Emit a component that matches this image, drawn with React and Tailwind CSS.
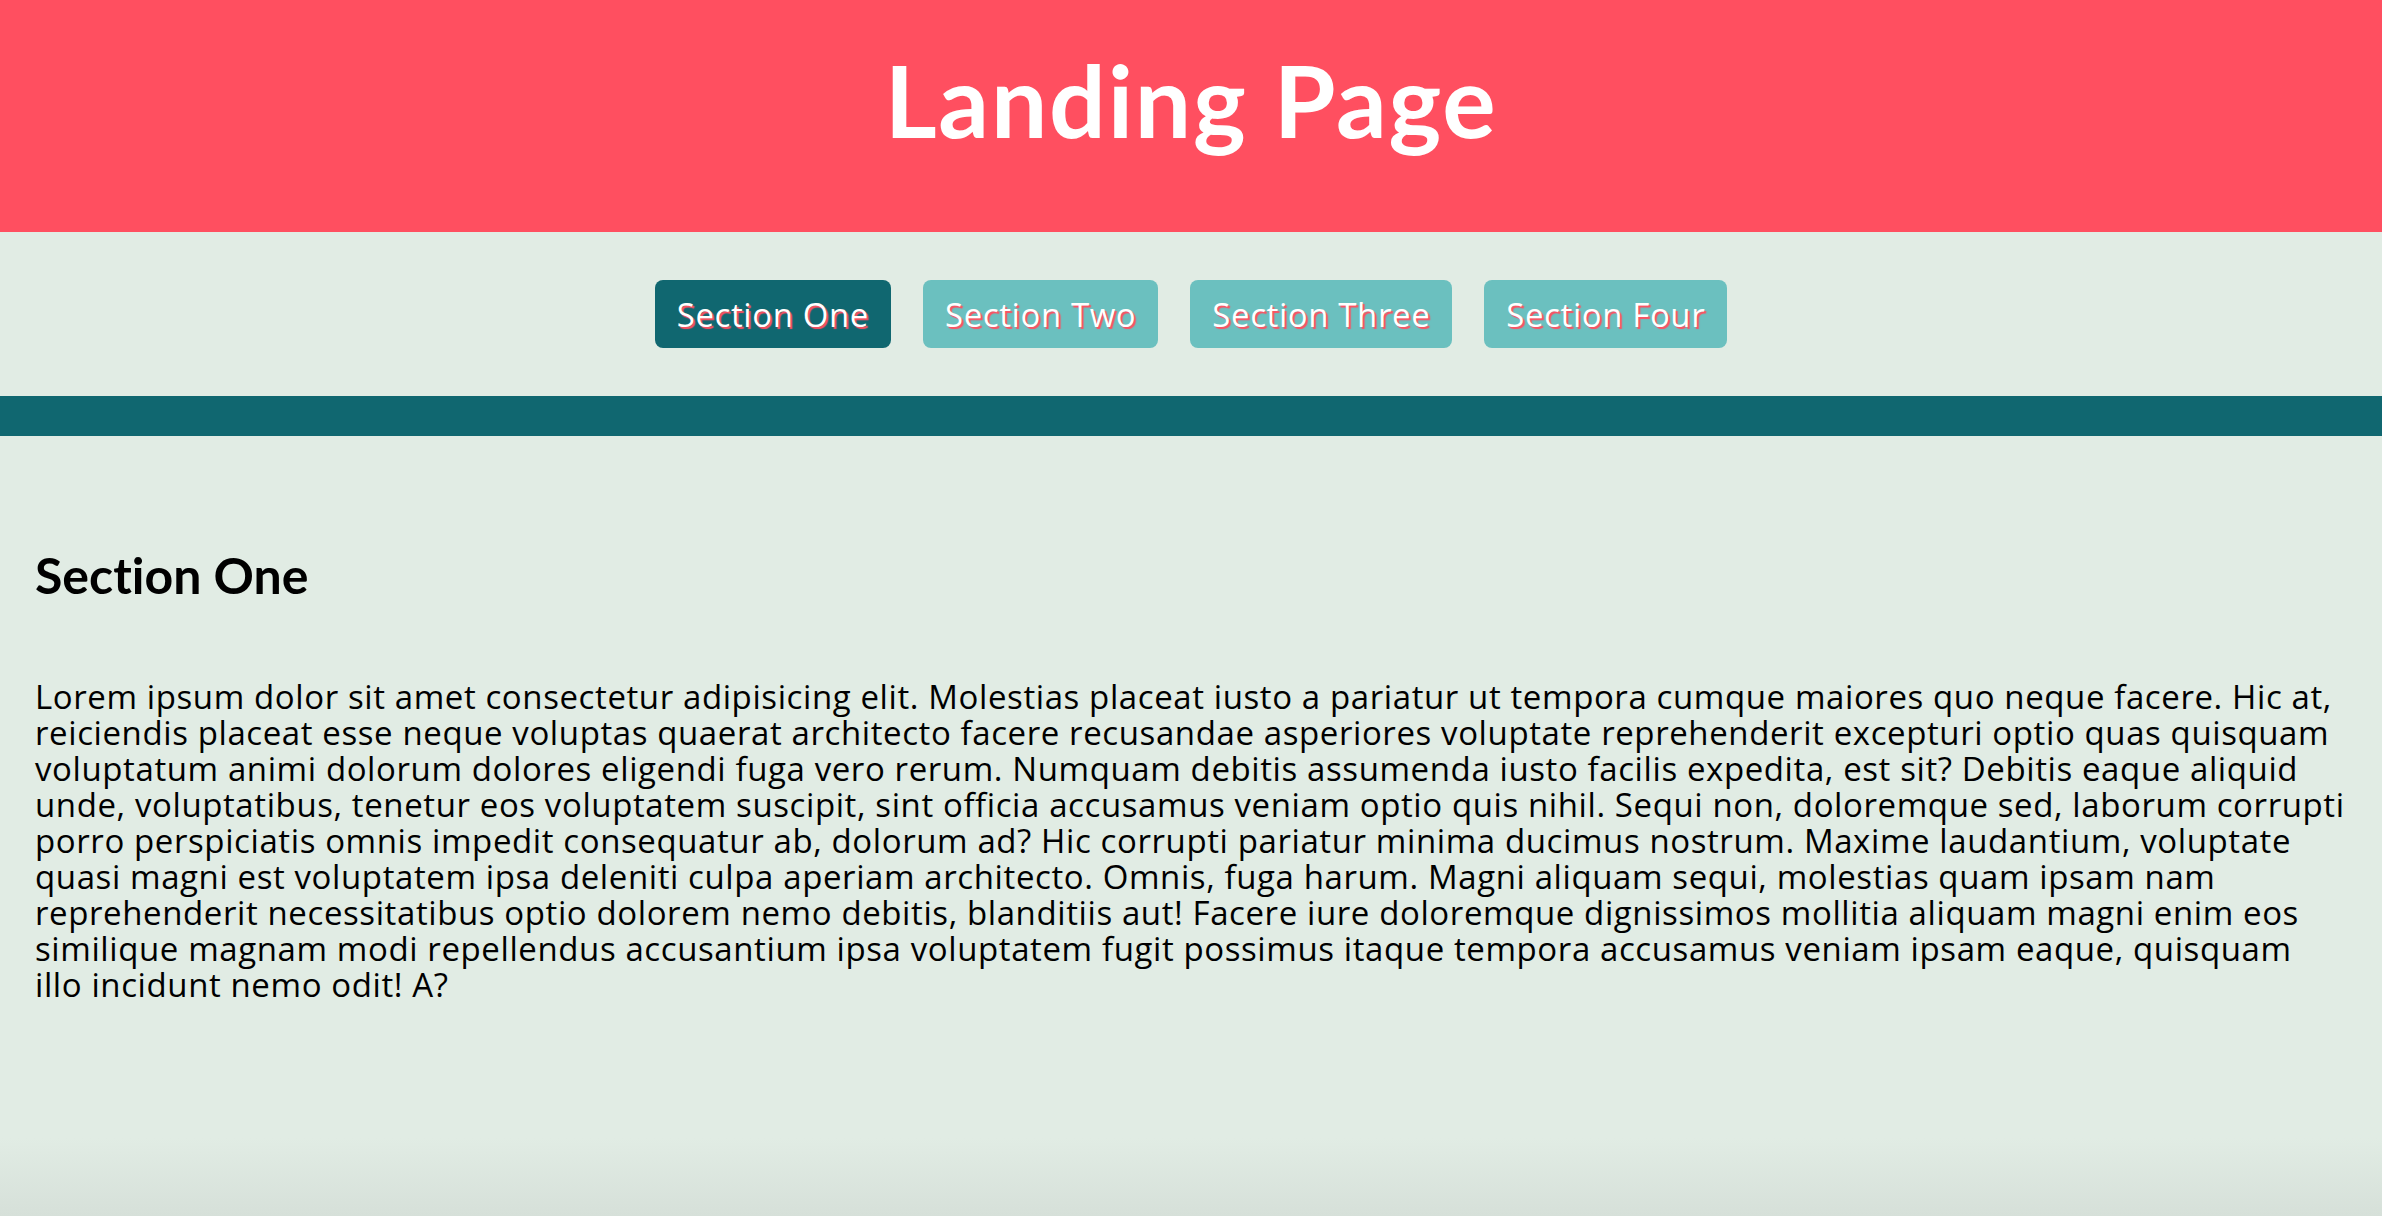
import React, { useState } from 'react';

const sections = ['Section One', 'Section Two', 'Section Three', 'Section Four'];

const lorem =
  'Lorem ipsum dolor sit amet consectetur adipisicing elit. Molestias placeat iusto a pariatur ut tempora cumque maiores quo neque facere. Hic at, reiciendis placeat esse neque voluptas quaerat architecto facere recusandae asperiores voluptate reprehenderit excepturi optio quas quisquam voluptatum animi dolorum dolores eligendi fuga vero rerum. Numquam debitis assumenda iusto facilis expedita, est sit? Debitis eaque aliquid unde, voluptatibus, tenetur eos voluptatem suscipit, sint officia accusamus veniam optio quis nihil. Sequi non, doloremque sed, laborum corrupti porro perspiciatis omnis impedit consequatur ab, dolorum ad? Hic corrupti pariatur minima ducimus nostrum. Maxime laudantium, voluptate quasi magni est voluptatem ipsa deleniti culpa aperiam architecto. Omnis, fuga harum. Magni aliquam sequi, molestias quam ipsam nam reprehenderit necessitatibus optio dolorem nemo debitis, blanditiis aut! Facere iure doloremque dignissimos mollitia aliquam magni enim eos similique magnam modi repellendus accusantium ipsa voluptatem fugit possimus itaque tempora accusamus veniam ipsam eaque, quisquam illo incidunt nemo odit! A?';

const App = () => {
  const [active, setActive] = useState(0);

  return (
    <div className="min-h-screen flex flex-col bg-[#e1ece4] font-['Open_Sans',sans-serif] [font-variant-ligatures:none]">
      {/* Header */}
      <header className="h-[232px] bg-[#ff4f60] flex items-center justify-center pb-[34px]">
        <h1 className="font-['Lato',sans-serif] font-bold text-[100px] leading-none text-white tracking-[1.8px]">
          Landing Page
        </h1>
      </header>

      {/* Nav */}
      <nav className="h-[164px] flex items-center justify-center gap-8">
        {sections.map((name, i) => (
          <button
            key={name}
            onClick={() => setActive(i)}
            className={`h-[68px] px-[22px] rounded-lg text-[33px] leading-none tracking-[0.6px] text-white [text-shadow:2px_2px_1px_#ff4f60] ${
              active === i ? 'bg-[#106770]' : 'bg-[#6bc0bf]'
            }`}
          >
            {name}
          </button>
        ))}
      </nav>

      {/* Divider */}
      <div className="h-10 bg-[#106770]" />

      {/* Content */}
      <main className="flex-grow px-[35px] pt-[114px] bg-[linear-gradient(to_bottom,#e1ece4_90%,#d6e0d9)]">
        <h2 className="font-['Lato',sans-serif] font-bold text-[50px] leading-none text-black">
          {sections[active]}
        </h2>
        <p className="mt-[79px] text-[33px] leading-[36px] tracking-[0.6px] text-black">{lorem}</p>
      </main>
    </div>
  );
};

export default App;
